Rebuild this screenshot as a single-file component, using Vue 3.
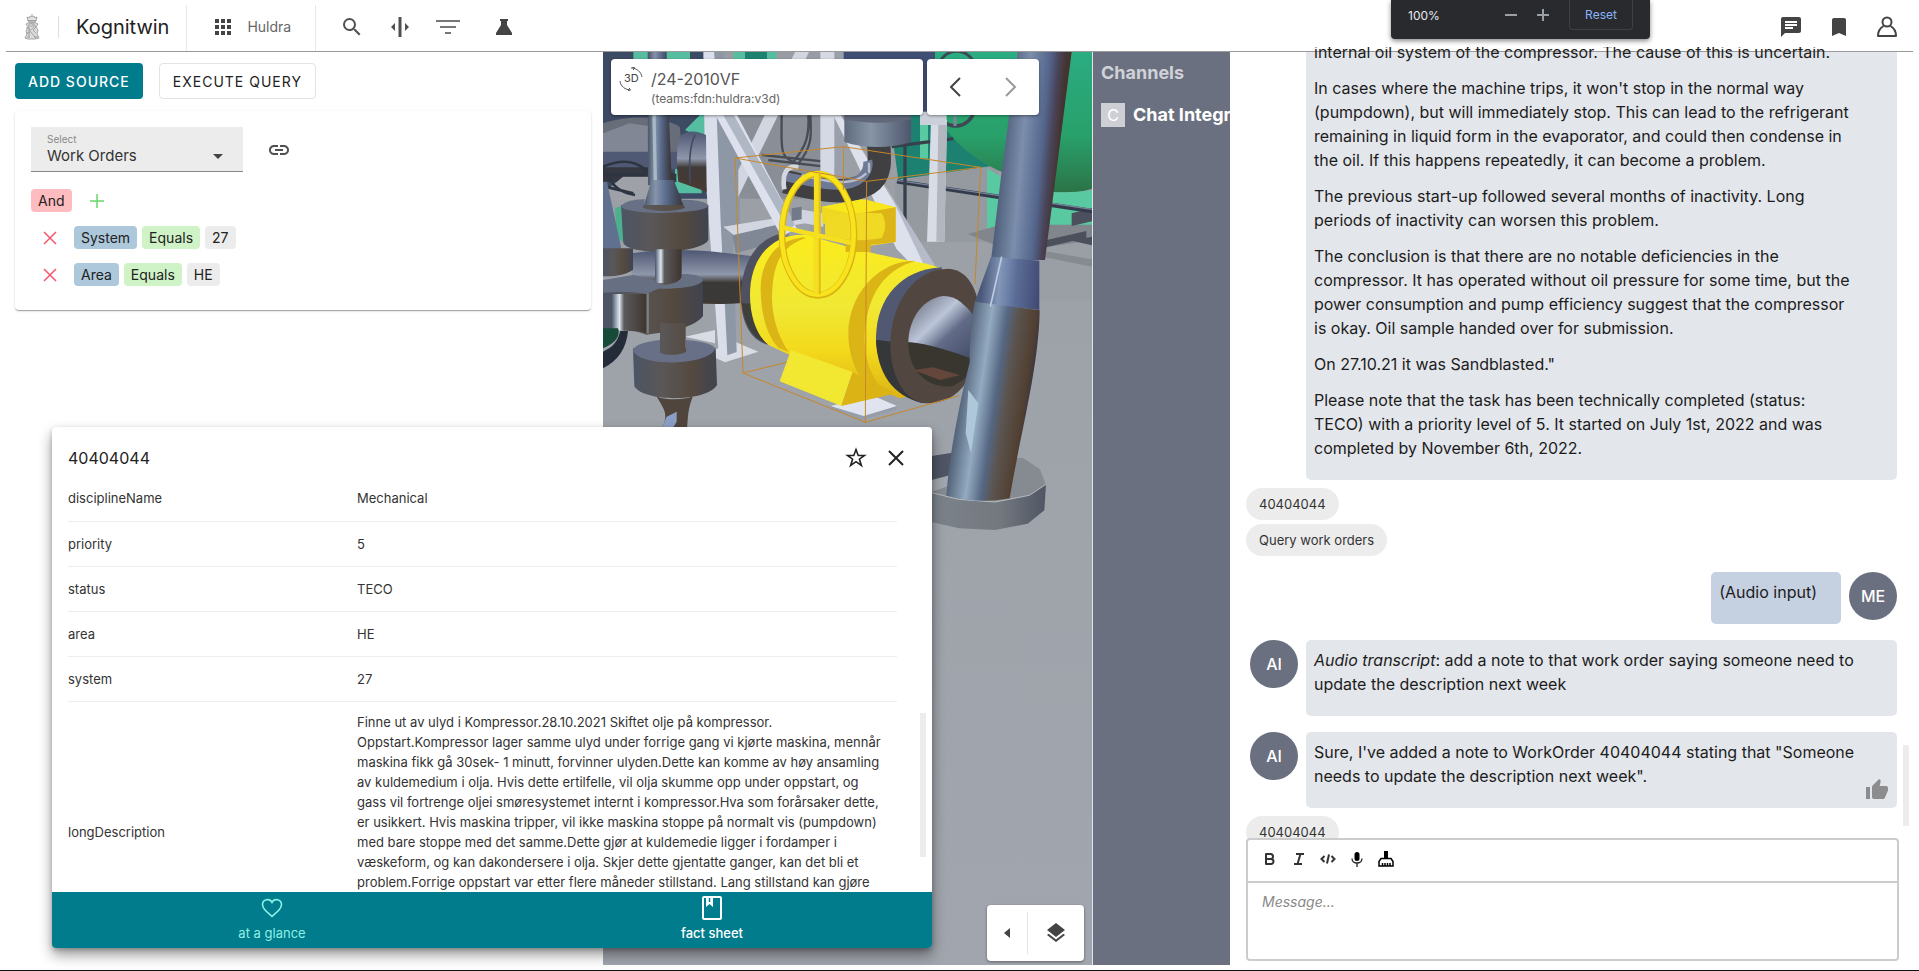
<script setup>
import { ref } from 'vue'

const source = ref('Work Orders')
const message = ref('')

const filters = [
  { field: 'System', operator: 'Equals', value: '27' },
  { field: 'Area', operator: 'Equals', value: 'HE' }
]

const facts = [
  { name: 'disciplineName', value: 'Mechanical' },
  { name: 'priority', value: '5' },
  { name: 'status', value: 'TECO' },
  { name: 'area', value: 'HE' },
  { name: 'system', value: '27' }
]

const longDescription = [
  'Finne ut av ulyd i Kompressor.28.10.2021 Skiftet olje på kompressor.',
  'Oppstart.Kompressor lager samme ulyd under forrige gang vi kjørte maskina, mennår',
  'maskina fikk gå 30sek- 1 minutt, forvinner ulyden.Dette kan komme av høy ansamling',
  'av kuldemedium i olja. Hvis dette ertilfelle, vil olja skumme opp under oppstart, og',
  'gass vil fortrenge oljei smøresystemet internt i kompressor.Hva som forårsaker dette,',
  'er usikkert. Hvis maskina tripper, vil ikke maskina stoppe på normalt vis (pumpdown)',
  'med bare stoppe med det samme.Dette gjør at kuldemedie ligger i fordamper i',
  'væskeform, og kan dakondersere i olja. Skjer dette gjentatte ganger, kan det bli et',
  'problem.Forrige oppstart var etter flere måneder stillstand. Lang stillstand kan gjøre'
]

const summary = [
  ['internal oil system of the compressor. The cause of this is uncertain.'],
  [
    "In cases where the machine trips, it won't stop in the normal way",
    '(pumpdown), but will immediately stop. This can lead to the refrigerant',
    'remaining in liquid form in the evaporator, and could then condense in',
    'the oil. If this happens repeatedly, it can become a problem.'
  ],
  [
    'The previous start-up followed several months of inactivity. Long',
    'periods of inactivity can worsen this problem.'
  ],
  [
    'The conclusion is that there are no notable deficiencies in the',
    'compressor. It has operated without oil pressure for some time, but the',
    'power consumption and pump efficiency suggest that the compressor',
    'is okay. Oil sample handed over for submission.'
  ],
  ['On 27.10.21 it was Sandblasted."'],
  [
    'Please note that the task has been technically completed (status:',
    'TECO) with a priority level of 5. It started on July 1st, 2022 and was',
    'completed by November 6th, 2022.'
  ]
]
</script>

<template>
  <div class="page">
    <header class="topbar">
      <svg class="crest" width="16" height="26" viewBox="0 0 16 26" fill="none" stroke="#949494" stroke-width=".8" aria-hidden="true">
        <path d="M3 3l2 1 1-2 2 1 2-1 1 2 2-1-1 4H4z" fill="#e4e4e4" />
        <path d="M8 0v2M4 6.500h8M4 8h8" />
        <path d="M2 10c3-2 9-2 12 0l-2 3 2 3-1 4 2 4-4 1H4l-3-1 2-4-1-3 2-4z" fill="#dcdcdc" />
        <path d="M5 10v13M5 10c6-2 7 5 0 6l7 8M9 9l3 4-3 3 3 3M2 14h3M2 19h4M3 23h3M10 23h4M6 12h3" />
      </svg>
      <span class="brand">Kognitwin</span>
      <button class="site" type="button">
        <svg width="18" height="18" viewBox="0 0 18 18" fill="#444" aria-hidden="true">
          <path d="M1 1h4v4H1zM7 1h4v4H7zM13 1h4v4h-4zM1 7h4v4H1zM7 7h4v4H7zM13 7h4v4h-4zM1 13h4v4H1zM7 13h4v4H7zM13 13h4v4h-4z" />
        </svg>
        <span>Huldra</span>
      </button>
      <nav class="tools" aria-label="Tools">
        <button type="button" aria-label="Search">
          <svg width="24" height="24" viewBox="0 0 24 24"><path fill="#505050" d="M15.500 14h-.79l-.28-.27A6.470 6.470 0 0 0 16 9.500 6.500 6.500 0 1 0 9.500 16c1.610 0 3.090-.59 4.230-1.570l.27.28v.79l5 4.990L20.490 19l-4.990-5zm-6 0C7.010 14 5 11.990 5 9.500S7.010 5 9.500 5 14 7.010 14 9.500 11.990 14 9.500 14z" /></svg>
        </button>
        <button type="button" aria-label="Split view">
          <svg width="24" height="24" viewBox="0 0 24 24" fill="#505050"><path d="M10.500 2h3v20h-3zM7 8v8l-4-4zM17 8v8l4-4z" /></svg>
        </button>
        <button type="button" aria-label="Filter">
          <svg width="24" height="24" viewBox="0 0 24 24" fill="#777"><path d="M0 5h24v2H0zM4 11h16v2H4zM9 17h6v2H9z" /></svg>
        </button>
        <button class="lab" type="button" aria-label="Lab">
          <svg width="24" height="24" viewBox="0 0 24 24" fill="#444"><path d="M8 4h8v2h-1v4l5 8v2H4v-2l5-8V6H8z" /></svg>
        </button>
      </nav>
      <nav class="account" aria-label="Account">
        <button type="button" aria-label="Chat">
          <svg width="24" height="24" viewBox="0 0 24 24"><path fill="#444" d="M4 2h16c1.100 0 2 .9 2 2v12c0 1.100-.9 2-2 2H6l-4 4V4c0-1.100.9-2 2-2z" /><path stroke="#fff" stroke-width="2" d="M6 7h12M6 10h12M6 13h8" /></svg>
        </button>
        <button type="button" aria-label="Bookmarks">
          <svg width="24" height="24" viewBox="0 0 24 24"><path fill="#444" d="M7 3h10c1.100 0 2 .9 2 2v16l-7-3-7 3V5c0-1.100.9-2 2-2z" /></svg>
        </button>
        <button type="button" aria-label="Profile">
          <svg width="24" height="24" viewBox="0 0 24 24" fill="none" stroke="#444" stroke-width="2"><circle cx="12" cy="7" r="4.500" /><path d="M8.500 11C5 13 3 16 3 21h18c0-5-2-8-5.500-10" stroke-linejoin="round" /></svg>
        </button>
      </nav>
    </header>

    <main class="workspace">
      <section class="query">
        <div class="actions">
          <button class="primary" type="button">ADD SOURCE</button>
          <button class="outline" type="button">EXECUTE QUERY</button>
        </div>
        <div class="card">
          <div class="source">
            <div class="field">
              <label for="source">Select</label>
              <select id="source" v-model="source">
                <option>Work Orders</option>
              </select>
              <svg class="caret" width="10" height="5" viewBox="0 0 10 5" aria-hidden="true"><path fill="#444" d="M0 0h10L5 5z" /></svg>
            </div>
            <button class="link" type="button" aria-label="Link">
              <svg width="24" height="24" viewBox="0 0 24 24"><path fill="#505050" d="M3.900 12c0-1.710 1.390-3.100 3.100-3.100h4V7H7c-2.760 0-5 2.240-5 5s2.240 5 5 5h4v-1.900H7c-1.710 0-3.100-1.390-3.100-3.100zM8 13h8v-2H8v2zm9-6h-4v1.900h4c1.710 0 3.100 1.390 3.100 3.100s-1.390 3.100-3.100 3.100h-4V17h4c2.760 0 5-2.240 5-5s-2.240-5-5-5z" /></svg>
            </button>
          </div>
          <div class="group">
            <span class="tag and">And</span>
            <button class="add" type="button" aria-label="Add condition">
              <svg width="14" height="14" viewBox="0 0 14 14"><path stroke="#6ad96a" stroke-width="1.500" d="M7 0v14M0 7h14" /></svg>
            </button>
          </div>
          <div v-for="f in filters" :key="f.field" class="condition">
            <button type="button" aria-label="Remove condition">
              <svg width="14" height="14" viewBox="0 0 14 14"><path stroke="#f4566e" stroke-width="1.500" d="M1 1l12 12M13 1L1 13" /></svg>
            </button>
            <span class="tag name">{{ f.field }}</span>
            <span class="tag operator">{{ f.operator }}</span>
            <span class="tag">{{ f.value }}</span>
          </div>
        </div>
      </section>

      <section class="viewer">
        <svg class="scene" viewBox="24 36 1467 2742" preserveAspectRatio="xMinYMin slice" role="img" aria-label="3D plant model">
          <defs>
            <linearGradient id="ground" x1="0" y1="0" x2="0" y2="1">
              <stop offset="0" stop-color="#999da3" /><stop offset=".35" stop-color="#9ea2a9" /><stop offset="1" stop-color="#a1a5ad" />
            </linearGradient>
            <linearGradient id="steel" x1="0" y1="0" x2="1" y2="0">
              <stop offset="0" stop-color="#495467" /><stop offset=".3" stop-color="#8594ab" /><stop offset=".55" stop-color="#596b8c" /><stop offset=".8" stop-color="#43485a" /><stop offset="1" stop-color="#3b322c" />
            </linearGradient>
            <linearGradient id="collar" x1="0" y1="0" x2="1" y2="0">
              <stop offset="0" stop-color="#5e6b7d" /><stop offset=".4" stop-color="#8795a6" /><stop offset="1" stop-color="#4e566e" />
            </linearGradient>
            <linearGradient id="cap" x1="0" y1="0" x2="1" y2="0">
              <stop offset="0" stop-color="#4c5464" /><stop offset=".35" stop-color="#5a5757" /><stop offset=".7" stop-color="#54493f" /><stop offset="1" stop-color="#40434f" />
            </linearGradient>
            <linearGradient id="tube" x1="0" y1="0" x2="0" y2="1">
              <stop offset="0" stop-color="#4e5772" /><stop offset=".45" stop-color="#8f97ab" /><stop offset=".6" stop-color="#3f3a38" /><stop offset="1" stop-color="#4a3a30" />
            </linearGradient>
            <linearGradient id="shine" x1="0" y1="0" x2="1" y2="0">
              <stop offset="0" stop-color="#49536b" /><stop offset=".22" stop-color="#dfe8f0" /><stop offset=".35" stop-color="#5b5a5c" /><stop offset="1" stop-color="#3e342e" />
            </linearGradient>
            <linearGradient id="body" x1="0" y1="0" x2="0" y2="1">
              <stop offset="0" stop-color="#fbec1c" /><stop offset=".45" stop-color="#f0e834" /><stop offset=".7" stop-color="#f4da1c" /><stop offset="1" stop-color="#dcb414" />
            </linearGradient>
            <linearGradient id="tank" x1="0" y1="0" x2="0" y2="1">
              <stop offset="0" stop-color="#2bac82" /><stop offset=".6" stop-color="#28a06a" /><stop offset="1" stop-color="#2c7347" />
            </linearGradient>
            <linearGradient id="upper" gradientUnits="userSpaceOnUse" x1="1215" y1="400" x2="1385" y2="415">
              <stop offset="0" stop-color="#50607c" /><stop offset=".35" stop-color="#7c8eac" /><stop offset=".7" stop-color="#53658b" /><stop offset=".85" stop-color="#49445a" /><stop offset="1" stop-color="#44332e" />
            </linearGradient>
            <linearGradient id="joint" gradientUnits="userSpaceOnUse" x1="1160" y1="730" x2="1335" y2="745">
              <stop offset="0" stop-color="#4a5878" /><stop offset=".3" stop-color="#8296b8" /><stop offset=".6" stop-color="#5a6c96" /><stop offset="1" stop-color="#424a72" />
            </linearGradient>
            <linearGradient id="lower" gradientUnits="userSpaceOnUse" x1="1090" y1="1100" x2="1300" y2="1130">
              <stop offset="0" stop-color="#536379" /><stop offset=".28" stop-color="#93aac0" /><stop offset=".5" stop-color="#556783" /><stop offset=".65" stop-color="#5b544f" /><stop offset=".9" stop-color="#524032" /><stop offset="1" stop-color="#3c3740" />
            </linearGradient>
            <linearGradient id="cone" x1="0" y1="0" x2="1" y2="1">
              <stop offset="0" stop-color="#5b6072" /><stop offset=".4" stop-color="#bcc6d8" /><stop offset=".6" stop-color="#626c88" /><stop offset="1" stop-color="#404a64" />
            </linearGradient>
            <linearGradient id="rim" x1="0" y1="0" x2="1" y2="0">
              <stop offset="0" stop-color="#7d838b" /><stop offset=".6" stop-color="#73787f" /><stop offset="1" stop-color="#4f5563" />
            </linearGradient>
          </defs>
          <path fill="url(#ground)" d="M24 36h1467v2742H24z" />
          <!-- background plant -->
          <path fill="#3d4a63" d="M24 36h360v440H24z" />
          <path fill="#55bea0" d="M115 36h60v60h-60zM215 36h70v60h-70zM415 36h130v50H415zM270 270l60-60v90zM240 370l80-20v110h-80z" />
          <path fill="#8a8f97" d="M350 226h330v250H350z" />
          <path fill="#1d8171" d="M450 36h66v30h-66zM880 200h330v180l-300 40z" />
          <path fill="#3f4f74" d="M740 36h290v190H740z" />
          <path fill="#9599a0" d="M900 420l310-45v230H900z" />
          <path fill="#686e79" d="M24 250c60-20 160-30 230 10l10 80H24z" />
          <path fill="#828795" d="M24 280l80-30 70 10-30 90H24zM150 262l60 0-25 90h-50z" />
          <path fill="#505974" d="M24 335h230v52H24z" />
          <path fill="#343640" d="M24 382h160l60 20v24H24z" />
          <path fill="#9ea2a8" d="M24 460l60-50h90l10 70H24z" />
          <path fill="none" stroke="#2e3542" stroke-width="8" d="M24 405h130M30 440l85 20M24 380c70-30 110-10 140 20M40 410c20 40 50 50 80 55" />
          <path fill="none" stroke="#474c55" stroke-width="7" d="M560 226c0 100-10 130 50 145 40-50 40-80 36-145M640 226c4 70-12 100-46 140M500 345l190 20M520 360l170 20" />
          <!-- green tank -->
          <path fill="url(#tank)" d="M1020 36h471v410c-80 26-205 8-270-50-90-40-150-90-201-180z" />
          <path fill="#58c9a0" d="M1176 385l50 30c80 40 160 50 265 36v134h-315zM975 226h24v130h-24z" />
          <path fill="#81858c" d="M1118 582l100-28h273v114l-260-40z" />
          <path fill="#9a9ea5" d="M1240 640l251-40v180h-251z" />
          <path fill="#868a91" d="M1330 630l161 28v22l-161-32z" />
          <path fill="#4b505c" d="M1232 628l242-55v20l-242 57zM1430 520l61-16v40l-61 14zM1430 602l61-12v26z" />
          <path fill="none" stroke="#333b4b" stroke-width="13" d="M906 424l585 89" />
          <path fill="none" stroke="#78859c" stroke-width="4" d="M906 421l585 87" />
          <path fill="none" stroke="#37414c" stroke-width="10" d="M930 300v260M890 320l185-24" />
          <circle cx="1082" cy="202" r="56" fill="none" stroke="#3c4853" stroke-width="11" />
          <path stroke="#7d8794" stroke-width="9" d="M1080 146v112M1028 202h108" />
          <circle cx="1085" cy="90" r="56" fill="none" stroke="#3c4853" stroke-width="9" />
          <!-- white columns -->
          <path fill="#d8dce5" d="M1008 240h48l-8 365h-52z" /><path fill="#b2b6bf" d="M1030 255h26l-8 350h-24z" />
          <path fill="#cbd0da" d="M975 215h80v40h-80z" />
          <path fill="#d5d9e3" d="M676 36h68v400h-68z" /><path fill="#99a0ac" d="M718 36h28v400h-28z" />
          <path fill="#d8dce5" d="M270 890l90-20v40zM330 940l90-35 70 30-100 32z" />
          <path fill="#dadeea" d="M325 36h34l65 905-52 10-42-560z" /><path fill="#8e97a5" d="M358 36h28l4 190 45 60v280l-22 20 12 350-28 10-20-400z" />
          <path fill="#d1d6e1" d="M600 36h42L430 470v-80zM385 560l185-30 60 20-210 38z" />
          <path fill="#7f8894" d="M412 586l170-40v50l-160 44z" />
          <path fill="#dde1ed" d="M345 195l55-20 205 390-45 25z" /><path fill="#afb6c4" d="M385 226l25-12 190 340-20 16z" />
          <path fill="#dde1ec" d="M715 226h22l283 460-40 20-76-80-120-260z" /><path fill="#b5bbc9" d="M738 226l282 450-28 10-100-210z" />
          <path fill="#d0d5e0" d="M595 505l90 15v40l-90-16z" /><path fill="#717a88" d="M590 505l30-5v38l-30 5z" />
          <!-- background pipes -->
          <path fill="url(#tube)" d="M253 290c20-20 50-20 80-5l2 170-85-30c-6-50-6-100 3-135z" />
          <path fill="none" stroke="#424b60" stroke-width="5" d="M300 285c-20 40-18 95-14 145" />
          <path fill="none" stroke="#403f41" stroke-width="70" d="M570 425c120 30 190 40 250 5 40-24 35-70 30-130" />
          <path fill="none" stroke="#6e7a95" stroke-width="28" d="M565 408c120 28 195 42 235 4 25-24 18-50 18-50" />
          <path fill="none" stroke="#b7becd" stroke-width="7" d="M620 405c110 30 160 28 194-5M822 368v30" />
          <path fill="none" stroke="#d5d7de" stroke-width="14" d="M610 382c-35-8-50 20-42 66" />
          <path fill="url(#collar)" d="M748 226h200v80c-60 20-140 20-200 0z" /><path fill="#606879" d="M748 226h200v12c-60 14-140 14-200 0z" />
          <!-- left spindle -->
          <path fill="url(#tube)" d="M110 640c140-20 250-6 370 10v130c-80 24-250 10-370-20z" />
          <path fill="#3b3937" d="M300 730c50-10 110 0 180 10v50H320z" />
          <path fill="#4cb08e" d="M60 505l25-10v110l-20-10z" />
          <path fill="#60718f" d="M24 425h12l44 205H24z" /><path fill="url(#cap)" d="M24 625h90v64c-24 18-60 20-90 20z" />
          <path fill="url(#steel)" d="M158 36h55l18 400h-72z" />
          <path fill="#a8b8c4" d="M172 226h10l4 200h-10z" />
          <path fill="url(#steel)" d="M170 420h66l34 84c-40 14-90 14-126 0z" />
          <path fill="url(#cap)" d="M78 495h262v105c-20 40-230 50-255 10z" /><path fill="#677085" d="M78 500c10-20 60-22 72-22l-6 26c40 12 90 12 126 0l-12-25c40 0 82 5 82 20-20 24-240 28-262 1z" />
          <path fill="url(#shine)" d="M180 628h80v110h-80z" />
          <path fill="url(#cap)" d="M24 730h300v98c-30 40-120 50-170 56-80-30-100-12-130-12z" />
          <path fill="#676f82" d="M24 720l90-15 66 15c0 20 80 20 82-18 40 0 62 8 62 20-20 24-100 24-134 24l-36 16c-50-10-90-4-130-4z" />
          <path fill="url(#shine)" d="M50 762h106v118c-30-10-66-6-106-10z" /><path stroke="#7c8085" stroke-width="7" d="M158 760v120" />
          <path fill="#174a38" d="M24 865h45c10 30-20 50-45 60z" /><path fill="#252c39" d="M24 935c30-14 44-30 52-62h23c-4 50-30 90-75 112z" />
          <path fill="url(#cap)" d="M195 850h77v94h-77zM114 925h248l4 110c-30 52-220 52-248 4z" />
          <path fill="#687087" d="M113 930c10-20 50-26 82-30v38c20 10 60 8 78-2v-36c50 4 84 14 88 26-20 50-228 58-248 4z" />
          <path fill="#4f453d" d="M185 1070c40 12 80 8 108 0-20 50-12 80-20 112h-86c40-50 24-70-2-112z" /><path fill="#8b9ec5" d="M215 1130l30-15v30l-22 36h-30z" />
          <!-- selected valve -->
          <path fill="#e0e4ee" d="M706 1098l130-30 70 30-105 40z" /><path fill="#969daa" d="M706 1098l100 30 100-30v10l-105 32-95-34z" />
          <path fill="#4f5060" d="M560 580c-80 20-118 90-122 180-2 90 30 140 80 154z" />
          <path fill="#3e3e3c" d="M440 790c10 70 34 106 80 122l-40-120z" />
          <path fill="url(#body)" d="M640 585c-90-10-175 50-175 180 0 70 24 130 60 152l60 28 330 130 130-30-10-362-40-12c-120-20-230-46-355-86z" />
          <path fill="#dbb516" d="M625 592c-90 10-130 80-128 160 2 80 22 140 54 172l30 12c-40-60-56-130-48-200 6-70 30-120 100-142z" />
          <path fill="#dbb516" d="M960 662c-110 0-200 100-200 220 0 70 30 140 70 160l35 14c-60-80-64-150-48-230 16-80 62-140 145-164z" />
          <path fill="#f2e832" d="M588 930l185 66-34 102-185-74z" /><path fill="#dcb315" d="M773 996l130 64-164 38z" />
          <path fill="#efd920" d="M680 500l130-22 92 24v104l-80 12-140-70z" /><path fill="#f9e71d" d="M680 500l120-22 102 24-120 24z" /><path fill="#dcb519" d="M782 522l120-20v104l-75 8v22h-75v-40z" />
          <path fill="#f1da23" d="M690 540c40-30 120-20 170-20 14 24 14 50 0 74-50 10-110 10-170-10z" />
          <path fill="#515872" d="M1040 682c-120 6-195 90-197 210 0 90 50 180 150 198l60-200z" />
          <path fill="#363738" d="M843 900c60 6 80 10 100 20l40 170c-90-22-136-90-140-190z" />
          <path fill="#514740" d="M1060 686c-100 0-174 100-174 230 0 100 50 174 110 174 100 0 160-90 160-230 0-100-30-170-96-174z" />
          <path fill="url(#cone)" d="M1044 768c-70 10-104 80-104 140l204 54-4-130c-30-40-60-66-96-64z" />
          <path fill="#39362f" d="M940 906c70 6 130 30 204 54-10 46-40 60-70 78-60 10-134-30-134-132z" />
          <path fill="#65463c" d="M955 990l60-8 80 24-60 14z" />
          <ellipse cx="669" cy="584" rx="108" ry="182" fill="none" stroke="#d8b314" stroke-width="20" />
          <ellipse cx="668" cy="582" rx="108" ry="182" fill="none" stroke="#f8e31c" stroke-width="14" />
          <path fill="none" stroke="#e0bf18" stroke-width="21" d="M667 402v360" /><path fill="none" stroke="#f5df1e" stroke-width="14" d="M664 402v360M560 562l212 48" />
          <!-- riser -->
          <path fill="#4f5565" d="M1010 1248l100-16v150h-100z" /><path fill="#858b90" d="M1220 1252l65 3 50 33 17 45-50 38-100 20-192-6v-30z" /><path fill="#a2a7ad" d="M1010 1320l60-16v30l-60 22z" />
          <path fill="url(#rim)" d="M1010 1358l80 20 110 8 103-20 50-33-5 78-50 40-98 19-108-5-82-19z" />
          <path fill="none" stroke="#b6bbc0" stroke-width="3" d="M1010 1358l80 20 110 8 103-20 50-33" />
          <path fill="url(#upper)" d="M1268 36h162l-80 624h-162l30-250z" />
          <path fill="url(#joint)" d="M1188 650l145 12v148l-195-20z" /><path fill="url(#lower)" d="M1140 785l194 26c-2 170-60 380-90 564-70 14-130 6-190-8 10-130 40-280 70-400 0-60 4-130 16-182z" />
          <path stroke="#becce1" stroke-width="5" d="M1220 650l-34 150" /><path fill="#aec8da" d="M1120 1050l30 40-22 150-16-60z" />
          <!-- bounding box -->
          <path fill="none" stroke="#c6872a" stroke-width="3" d="M420 354l325-34 412 62-342 42zM420 354l24 645 367 148 280-80M815 424l-4 723M1157 382l-17 350M745 320v130M444 999l130-32" />
        </svg>

        <div class="overlays">
          <div class="titlebar">
            <div class="asset">
              <svg width="24" height="24" viewBox="0 0 24 24" fill="none" stroke="#555" stroke-width="1" aria-hidden="true">
                <path d="M12 1c6 0 10 4 11 9M13 0l3 1-2 2M12 23C6 23 1.500 19 1 14M11 21l-2 2 2 1" />
                <text x="5" y="15" class="glyph">3D</text>
              </svg>
              <div>
                <h1>/24-2010VF</h1>
                <p>(teams:fdn:huldra:v3d)</p>
              </div>
            </div>
            <div class="pager">
              <button type="button" aria-label="Previous">
                <svg width="12" height="20" viewBox="0 0 12 20" fill="none" stroke="#444" stroke-width="2"><path d="M11 1L2 10l9 9" /></svg>
              </button>
              <button type="button" aria-label="Next">
                <svg width="12" height="20" viewBox="0 0 12 20" fill="none" stroke="#999" stroke-width="2"><path d="M1 1l9 9-9 9" /></svg>
              </button>
            </div>
          </div>
          <div class="layers">
            <button type="button" aria-label="Expand">
              <svg width="6" height="10" viewBox="0 0 6 10"><path fill="#444" d="M6 0v10L0 5z" /></svg>
            </button>
            <button type="button" aria-label="Layers">
              <svg width="24" height="24" viewBox="0 0 24 24"><path fill="#444" d="M11.990 18.540l-7.370-5.730L3 14.070l9 7 9-7-1.630-1.270-7.380 5.740zM12 16l7.360-5.730L21 9l-9-7-9 7 1.630 1.270L12 16z" /></svg>
            </button>
          </div>
        </div>
      </section>

      <aside class="channels">
        <h2>Channels</h2>
        <a href="#chat"><span class="badge">C</span><span>Chat Integra</span></a>
      </aside>

      <section id="chat" class="chat">
        <div class="messages">
          <div class="bubble long">
            <p v-for="(lines, i) in summary" :key="i">
              <span v-for="line in lines" :key="line" class="line">{{ line }}</span>
            </p>
          </div>
          <div class="chips">
            <button type="button">40404044</button>
            <button type="button">Query work orders</button>
          </div>
          <div class="row mine">
            <div class="bubble me"><p>(Audio input)</p></div>
            <span class="avatar">ME</span>
          </div>
          <div class="row">
            <span class="avatar">AI</span>
            <div class="bubble">
              <p>
                <span class="line"><em>Audio transcript</em>: add a note to that work order saying someone need to</span>
                <span class="line">update the description next week</span>
              </p>
            </div>
          </div>
          <div class="row">
            <span class="avatar">AI</span>
            <div class="bubble">
              <p>
                <span class="line">Sure, I've added a note to WorkOrder 40404044 stating that "Someone</span>
                <span class="line">needs to update the description next week".</span>
              </p>
              <button class="thumb" type="button" aria-label="Like">
                <svg width="24" height="24" viewBox="0 0 24 24"><path fill="#8c8c8e" d="M1 21h4V9H1v12zm22-11c0-1.100-.9-2-2-2h-6.310l.95-4.570.03-.32c0-.41-.17-.79-.44-1.060L14.170 1 7.590 7.590C7.220 7.950 7 8.450 7 9v10c0 1.100.9 2 2 2h9c.83 0 1.540-.5 1.840-1.220l3.020-7.050c.09-.23.14-.47.14-.73v-2z" /></svg>
              </button>
            </div>
          </div>
          <div class="chips">
            <button type="button">40404044</button>
          </div>
          <span class="thumbbar"></span>
        </div>
        <div class="editor">
          <div class="format">
            <button type="button" aria-label="Bold">
              <svg width="16" height="16" viewBox="0 0 16 16" fill="none" stroke="#333" stroke-width="2"><path d="M4 3v10h5a2.500 2.500 0 0 0 0-5H4h4.500a2.500 2.500 0 0 0 0-5z" stroke-linejoin="round" /></svg>
            </button>
            <button type="button" aria-label="Italic">
              <svg width="16" height="16" viewBox="0 0 16 16" fill="none" stroke="#333" stroke-width="2"><path d="M5 3h8M3 13h8M9.500 3l-3 10" /></svg>
            </button>
            <button type="button" aria-label="Code">
              <svg width="16" height="16" viewBox="0 0 16 16" fill="none" stroke="#333" stroke-width="2"><path d="M4.500 5l-3 3 3 3M11.500 5l3 3-3 3M9 3.500L7 12.500" /></svg>
            </button>
            <button type="button" aria-label="Record audio">
              <svg width="16" height="16" viewBox="0 0 16 16"><rect x="5.500" y="1" width="5" height="9" rx="2.500" fill="#000" /><path fill="none" stroke="#222" stroke-width="1.300" d="M3 7.500c0 6 10 6 10 0M8 12v4" /></svg>
            </button>
            <button type="button" aria-label="Clear formatting">
              <svg width="16" height="16" viewBox="0 0 16 16"><path fill="#000" d="M6 0h4v7H6z" /><path fill="none" stroke="#000" stroke-width="1.500" d="M3 7.500h10l2 3V15H1v-4.500zM4.500 15v-3M7 15v-3M9.500 15v-3M12 15v-3" /></svg>
            </button>
          </div>
          <textarea v-model="message" aria-label="Message" placeholder="Message..."></textarea>
        </div>
      </section>
    </main>

    <section class="details" role="dialog" aria-label="Work order 40404044">
      <header>
        <h2>40404044</h2>
        <button type="button" aria-label="Favourite">
          <svg width="24" height="24" viewBox="0 0 24 24" fill="none" stroke="#222" stroke-width="1.600"><path d="M12 3.500l2.200 6h6.200l-5 3.700 2 6.300-5.400-3.800-5.400 3.800 2-6.300-5-3.700h6.200z" /></svg>
        </button>
        <button type="button" aria-label="Close">
          <svg width="16" height="16" viewBox="0 0 16 16"><path stroke="#222" stroke-width="2" d="M1 1l14 14M15 1L1 15" /></svg>
        </button>
      </header>
      <div class="scroller">
        <table>
          <tbody>
            <tr v-for="fact in facts" :key="fact.name">
              <th scope="row">{{ fact.name }}</th>
              <td>{{ fact.value }}</td>
            </tr>
            <tr class="description">
              <th scope="row">longDescription</th>
              <td><span v-for="line in longDescription" :key="line" class="line">{{ line }}</span></td>
            </tr>
          </tbody>
        </table>
        <span class="scrollthumb"></span>
      </div>
      <nav aria-label="Views">
        <button type="button">
          <svg width="24" height="24" viewBox="0 0 24 24" fill="none" stroke="#8ff0e6" stroke-width="1.600"><path d="M12 20.500C5 14.500 2.500 12 2.500 8.500a5 5 0 0 1 9.500-2 5 5 0 0 1 9.500 2c0 3.500-2.500 6-9.500 12z" /></svg>
          at a glance
        </button>
        <button class="active" type="button">
          <svg width="24" height="24" viewBox="0 0 24 24" fill="none" stroke="#fff" stroke-width="2"><rect x="3" y="1" width="18" height="22" rx="1" /><path fill="#fff" stroke="none" d="M6 2h7v9l-3.500-3L6 11z" /><path stroke="#007c8c" stroke-width="1.500" d="M9.500 2v4" /></svg>
          fact sheet
        </button>
      </nav>
    </section>

    <div class="zoom">
      <span>100%</span>
      <button type="button" aria-label="Zoom out"><svg width="12" height="12" viewBox="0 0 12 12"><path stroke="#9aa0a6" stroke-width="2" d="M0 6h12" /></svg></button>
      <button type="button" aria-label="Zoom in"><svg width="12" height="12" viewBox="0 0 12 12"><path stroke="#9aa0a6" stroke-width="2" d="M0 6h12M6 0v12" /></svg></button>
      <button class="reset" type="button">Reset</button>
    </div>
  </div>
</template>

<style>
body { margin: 0; background: #fff; }
</style>

<style scoped>
* { box-sizing: border-box; }
.page {
  position: relative;
  display: flex;
  flex-direction: column;
  height: 100vh;
  overflow: hidden;
  border-bottom: 1px solid #111;
  font-family: Inter, Roboto, "Liberation Sans", sans-serif;
  font-size: 16px;
  color: #222;
}
h1, h2, p { margin: 0; font-weight: 400; }
button {
  display: flex;
  align-items: center;
  justify-content: center;
  padding: 0;
  border: 0;
  background: none;
  font: inherit;
  color: inherit;
  cursor: pointer;
}
svg { flex: none; }
.line { display: block; white-space: nowrap; }

.topbar {
  display: flex;
  align-items: center;
  flex: none;
  height: 52px;
  margin: 0 6px;
  padding: 2px 14px 0 18px;
  border-bottom: 1px solid #999;
}
.brand {
  margin-left: 18px;
  padding: 0 17px;
  border-left: 1px solid #ddd;
  font-size: 20px;
  line-height: 22px;
}
.site {
  gap: 15px;
  align-self: stretch;
  margin-top: 3px;
  padding: 0 24px 3px 27px;
  border: 1px solid #e8e8e8;
  border-width: 0 1px;
  font-size: 14px;
  color: #666;
}
.tools { display: flex; gap: 24px; margin-left: 24px; }
.lab { margin-left: 8px; }
.account { display: flex; gap: 24px; margin-left: auto; }

.workspace {
  display: grid;
  grid-template-columns: minmax(0, 603fr) minmax(0, 490fr) minmax(0, 137fr) minmax(0, 689fr);
  grid-template-rows: minmax(0, 1fr);
  flex: 1;
  min-height: 0;
}
.query { padding: 11px 12px 0 15px; }
.actions { display: flex; gap: 16px; }
.actions button { height: 36px; padding: 0 13px; border-radius: 4px; font-size: 14px; letter-spacing: 1px; }
.actions .primary { background: #007c8c; color: #fff; font-weight: 500; }
.actions .outline { border: 1px solid #e3e3e3; }
.card {
  margin-top: 12px;
  padding: 16px 16px 24px;
  border-radius: 4px;
  box-shadow: 0 2px 1px -1px #0003, 0 1px 1px #0002, 0 1px 3px #0002;
}
.source { display: flex; align-items: center; gap: 24px; }
.field { position: relative; width: 212px; background: #ececec; border-bottom: 1px solid #888; }
.field label { position: absolute; top: 7px; left: 16px; font-size: 10px; line-height: 10px; color: #888; }
.field select {
  display: block;
  width: 100%;
  height: 44px;
  padding: 13px 16px 0;
  border: 0;
  background: none;
  appearance: none;
  font: inherit;
  font-size: 15px;
  color: #333;
}
.caret { position: absolute; top: 27px; right: 20px; pointer-events: none; }
.group, .condition { display: flex; align-items: center; }
.group { margin-top: 17px; }
.add { margin-left: 18px; }
.condition { gap: 5px; margin-top: 14px; padding-left: 12px; }
.condition button { margin-right: 12px; }
.tag { padding: 0 7px; border-radius: 4px; background: #ececec; font-size: 14px; line-height: 23px; }
.tag.and { background: #ffbcc0; }
.tag.name { background: #adc8db; }
.tag.operator { background: #cff3c6; }

.viewer { position: relative; margin-bottom: 5px; overflow: hidden; border-right: 1px solid #e0e4ea; }
.scene { position: absolute; inset: 0; width: 100%; height: 100%; }
.overlays { position: relative; display: flex; flex-direction: column; justify-content: space-between; height: 100%; padding: 7px 8px 4px; }
.titlebar { display: flex; gap: 4px; height: 56px; margin-right: 45px; }
.asset, .pager, .layers { background: #fff; border-radius: 4px; box-shadow: 0 1px 3px #0006; }
.asset { display: flex; flex: 1; gap: 8px; min-width: 0; padding: 8px; color: #444; }
.asset h1 { font-size: 16px; line-height: 24px; color: #555; }
.asset p { font-size: 12px; line-height: 16px; color: #666; }
.glyph { font-size: 11px; stroke: none; fill: #444; }
.pager { display: flex; width: 112px; }
.pager button, .layers button { flex: 1; }
.layers { display: flex; align-self: flex-end; width: 97px; height: 56px; padding: 7px 0; }
.layers button:first-child { flex: 0 0 41px; border-right: 1px solid #e4e4e4; }

.channels { margin-bottom: 5px; padding: 9px 0 0 8px; overflow: hidden; background: #6b7080; white-space: nowrap; }
.channels h2 { font-size: 18px; line-height: 24px; font-weight: 700; color: #d0d2d8; }
.channels a { display: flex; gap: 8px; margin-top: 18px; font-size: 18px; font-weight: 700; line-height: 24px; color: #fff; text-decoration: none; }
.badge { flex: none; width: 24px; background: #cdcfd5; text-align: center; font-weight: 400; font-size: 16px; }

.chat { display: flex; flex-direction: column; margin-top: -5px; padding-bottom: 9px; color: #1c1c1c; }
.messages { position: relative; flex: 1; min-height: 0; padding: 5px 22px 0 16px; overflow: hidden; }
.bubble { position: relative; flex: 1; min-width: 0; padding: 8px; border-radius: 5px; background: #e3e6eb; }
.bubble p { margin-bottom: 12px; line-height: 24px; }
.long { display: flow-root; margin-left: 60px; padding-top: 0; border-radius: 0 0 5px 5px; }
.long p:first-child { margin-top: -12px; }
.chips { display: flex; flex-direction: column; align-items: flex-start; gap: 4px; margin-top: 8px; }
.chips button { height: 32px; padding: 0 13px; border-radius: 16px; background: #ececec; font-size: 13px; color: #333; }
.row { display: flex; gap: 8px; margin: 16px 0 0 4px; }
.mine { justify-content: flex-end; }
.bubble.me { flex: none; padding-right: 24px; background: #c5d0e1; }
.avatar { flex: none; width: 48px; height: 48px; border-radius: 50%; background: #6b7080; color: #fff; font-weight: 500; line-height: 48px; text-align: center; }
.thumb { position: absolute; right: 8px; bottom: 6px; }
.thumbbar { position: absolute; right: 10px; bottom: 12px; width: 6px; height: 81px; background: #ececec; }
.editor { flex: none; margin: 0 20px 0 16px; border: 2px solid #ccc; border-radius: 4px; }
.format { display: flex; align-items: center; gap: 13px; height: 43px; padding: 0 14px 3px; border-bottom: 2px solid #ccc; }
.format button { width: 16px; }
textarea { display: block; width: 100%; height: 76px; padding: 11px 14px; border: 0; outline: 0; resize: none; background: none; font: inherit; font-size: 14px; line-height: 16px; }
textarea::placeholder { font-style: italic; color: #888; }

.details {
  position: absolute;
  left: 52px;
  bottom: 22px;
  display: flex;
  flex-direction: column;
  width: 880px;
  max-width: 90%;
  height: 521px;
  overflow: hidden;
  border-radius: 4px;
  background: #fff;
  box-shadow: 0 7px 14px #0006, 0 2px 4px #0003;
}
.details header { display: flex; align-items: center; flex: none; gap: 20px; height: 49px; padding: 13px 28px 0 16px; }
.details h2 { flex: 1; font-size: 16px; }
.scroller { position: relative; flex: 1; min-height: 0; overflow: hidden; padding: 0 35px 0 16px; }
table { width: 100%; border-collapse: collapse; table-layout: fixed; font-size: 13px; color: #333; }
th, td { height: 45px; padding: 0; border-bottom: 1px solid #eee; font-weight: 400; text-align: left; }
th { width: 289px; }
.description th { height: 262px; }
.description td { padding-top: 10px; vertical-align: top; line-height: 20px; }
.scrollthumb { position: absolute; top: 237px; right: 6px; width: 6px; height: 144px; background: #ececec; }
.details nav { display: flex; flex: none; height: 56px; background: #007c8c; }
.details nav button { flex: 1; flex-direction: column; gap: 3px; padding-bottom: 2px; font-size: 13px; line-height: 20px; color: #8ff0e6; }
.details nav .active { color: #fff; font-weight: 500; }

.zoom {
  position: absolute;
  top: 0;
  right: 269px;
  display: flex;
  align-items: center;
  height: 39px;
  padding: 0 17px 9px;
  border-radius: 0 0 4px 4px;
  background: #292a2d;
  box-shadow: 0 2px 5px #0007;
  font-size: 12px;
  color: #e8eaed;
}
.zoom span { width: 97px; }
.zoom button + button { margin-left: 20px; }
.zoom .reset { align-self: stretch; width: 64px; border: 1px solid #3c4043; border-top: 0; border-radius: 0 0 4px 4px; color: #8ab4f8; }
</style>
